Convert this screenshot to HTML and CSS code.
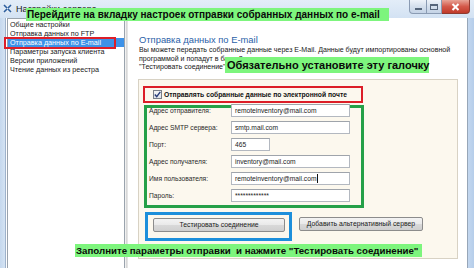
FILE: index.html
```html
<!DOCTYPE html>
<html lang="ru">
<head>
<meta charset="utf-8">
<title>Настройки</title>
<link rel="stylesheet" href="styles.css">
</head>
<body>
<div class="window">
  <div class="titlebar">
    <svg class="app-icon" width="9" height="9" viewBox="0 0 9 9">
      <rect x="0" y="0" width="9" height="9" fill="#dfe9f5"/>
      <path d="M1 1 L4 4 M8 1 L5 4 M1 8 L4 5 M8 8 L5 5" stroke="#2d5f9e" stroke-width="1.6"/>
    </svg>
    <span class="title">Настройки сервера</span>
    <div class="controls">
      <div class="ctl ctl-min"><span class="min-glyph"></span></div>
      <div class="ctl ctl-max"><span class="max-glyph"></span></div>
      <div class="ctl ctl-close">
        <svg width="9" height="8" viewBox="0 0 9 8"><path d="M1.5 1 L7.5 7 M7.5 1 L1.5 7" stroke="#fff" stroke-width="2"/></svg>
      </div>
    </div>
  </div>
  <div class="body">
    <div class="frame-left"></div>
    <div class="list">
      <div class="item">Общие настройки</div>
      <div class="item">Отправка данных по FTP</div>
      <div class="item selected">Отправка данных по E-mail</div>
      <div class="item">Параметры запуска клиента</div>
      <div class="item">Версии приложений</div>
      <div class="item">Чтение данных из реестра</div>
    </div>
    <div class="splitter"></div>
    <div class="content">
      <div class="heading">Отправка данных по E-mail</div>
      <p class="desc">Вы можете передать собранные данные через E-Mail. Данные будут импортированы основной<br>программой и попадут в базу. Для проверки соединения нажмите кнопку<br>"Тестировать соединение".</p>
      <div class="group">
        <div class="annot-red check-row">
          <span class="checkbox">
            <svg width="7" height="7" viewBox="0 0 7 7"><path d="M0.8 3.6 L2.7 5.6 L6.3 0.9" fill="none" stroke="#2a3d78" stroke-width="1.4"/></svg>
          </span>
          <span class="check-label">Отправлять собранные данные по электронной почте</span>
        </div>
        <div class="annot-green fields">
          <div class="row"><span class="label">Адрес отправителя:</span><span class="input">remoteinventory@mail.com</span></div>
          <div class="row"><span class="label">Адрес SMTP сервера:</span><span class="input">smtp.mail.com</span></div>
          <div class="row"><span class="label">Порт:</span><span class="input input-short">465</span></div>
          <div class="row"><span class="label">Адрес получателя:</span><span class="input">inventory@mail.com</span></div>
          <div class="row"><span class="label">Имя пользователя:</span><span class="input">remoteinventory@mail.com<span class="caret"></span></span></div>
          <div class="row"><span class="label">Пароль:</span><span class="input">*************</span></div>
        </div>
        <div class="buttons">
          <div class="annot-blue"><span class="btn btn-test">Тестировать соединение</span></div>
          <span class="btn btn-alt">Добавить альтернативный сервер</span>
        </div>
      </div>
    </div>
    <div class="frame-right"></div>
  </div>

  <div class="list-annot"></div>
  <div class="banner banner-top">Перейдите на вкладку настроек отправки собранных данных по e-mail</div>
  <div class="banner banner-mid">Обязательно установите эту галочку</div>
  <div class="banner banner-bottom">Заполните параметры отправки&nbsp; и нажмите "Тестировать соединение"</div>
</div>
</body>
</html>
```

FILE: styles.css
```css
* { box-sizing: border-box; }
html, body {
  margin: 0;
  padding: 0;
  width: 474px;
  height: 268px;
  overflow: hidden;
  background: #fff;
}
.window {
  position: relative;
  width: 474px;
  height: 268px;
  display: flex;
  flex-direction: column;
  font-family: "Liberation Sans", Arial, sans-serif;
  font-size: 6.7px;
  color: #222;
}
.titlebar {
  height: 18px;
  flex: none;
  display: flex;
  align-items: flex-start;
  background: linear-gradient(#e3edf8, #d3e2f3);
  padding-left: 3px;
  padding-top: 4px;
  position: relative;
}
.app-icon { flex: none; }
.title {
  margin-left: 4px;
  font-family: "Liberation Sans", sans-serif;
  font-size: 9px;
  line-height: 10px;
  color: #1b1b1b;
}
.controls {
  margin-left: auto;
  margin-top: -4px;
  margin-right: 4px;
  display: flex;
  height: 14px;
}
.ctl {
  height: 14px;
  border: 1px solid #8a9bb3;
  border-top: none;
  display: flex;
  align-items: center;
  justify-content: center;
  background: linear-gradient(#eef3f9, #d4dfec 50%, #c4d3e6);
}
.ctl-min { width: 18px; border-radius: 0 0 0 4px; }
.ctl-max { width: 15px; border-left: none; }
.ctl-close {
  width: 28px;
  border-left: none;
  border-color: #8e3a30;
  border-radius: 0 0 4px 0;
  background: linear-gradient(#e8a497, #d4594a 50%, #c03a2a);
}
.min-glyph {
  width: 7px; height: 2px;
  background: #fff;
  border: 1px solid #55657a;
  margin-top: 5px;
}
.max-glyph {
  width: 8px; height: 6px;
  border: 1px solid #55657a;
  border-top-width: 2px;
  background: transparent;
}
.body {
  flex: 1;
  display: flex;
  min-height: 0;
}
.frame-left {
  width: 7px;
  flex: none;
  background: linear-gradient(90deg, #c5d8ee, #d4e3f3 70%, #9fb3cc 70%, #9fb3cc 85%, #fff 85%);
}
.list {
  width: 118px;
  flex: none;
  background: #fff;
  border: 1px solid #9aa3ad;
  border-bottom: none;
  padding-top: 1px;
  font-size: 7.2px;
}
.item {
  height: 9px;
  line-height: 9px;
  padding-left: 2px;
  white-space: nowrap;
  color: #1a1a1a;
}
.item.selected {
  background: #3d92e8;
  color: #fff;
}
.splitter {
  width: 3px;
  flex: none;
  background: linear-gradient(90deg, #fff, #dcdcdc 40%, #cfcfcf 70%, #fff);
}
.content {
  flex: 1;
  background: #fff;
  padding: 16px 0 0 10px;
  min-width: 0;
}
.heading {
  font-size: 9.4px;
  line-height: 12px;
  color: #2b5fa8;
  padding-left: 1px;
  white-space: nowrap;
}
.desc {
  margin: 0;
  padding-left: 1px;
  font-size: 7.05px;
  line-height: 8.5px;
  white-space: nowrap;
  color: #202020;
}
.group {
  margin-top: 7px;
  width: 320px;
  height: 180px;
  background: #fcf8ee;
  border: 1px solid #d8d2c4;
  padding: 6px 0 0 4px;
}
.annot-red {
  border: 2px solid #dc1e28;
}
.check-row {
  width: 220px;
  height: 17px;
  display: flex;
  align-items: center;
  padding-left: 8px;
}
.checkbox {
  width: 9px;
  height: 9px;
  flex: none;
  border: 1px solid #7a7f88;
  background: linear-gradient(#f4f4f4, #dfe3ea);
  display: flex;
  align-items: center;
  justify-content: center;
}
.check-label {
  margin-left: 2px;
  font-weight: bold;
  font-size: 6.75px;
  white-space: nowrap;
  color: #111;
}
.annot-green {
  border: 3px solid #25a048;
}
.fields {
  margin-top: 2px;
  margin-left: 1px;
  width: 220px;
  height: 103px;
  padding: 0 0 0 2px;
  display: flex;
  flex-direction: column;
  gap: 4.2px;
}
.row {
  display: flex;
  align-items: center;
  height: 13px;
  flex: none;
}
.row:first-child { margin-top: -4px; }
.label {
  width: 82px;
  flex: none;
  white-space: nowrap;
  color: #2a2a2a;
}
.input {
  width: 119px;
  height: 13px;
  flex: none;
  background: #fff;
  border: 1px solid #b3b8c0;
  border-top-color: #9fa4ab;
  padding-left: 3px;
  line-height: 11px;
  white-space: nowrap;
  overflow: hidden;
  color: #222;
  display: flex;
  align-items: center;
}
.input-short { width: 39px; }
.caret {
  display: inline-block;
  width: 1px;
  height: 9px;
  background: #111;
}
.buttons {
  margin-top: 4px;
  margin-left: 2px;
  display: flex;
  align-items: flex-start;
  gap: 7px;
}
.annot-blue {
  width: 147px;
  height: 29px;
  border: 3px solid #1d8fdb;
  padding: 3px 0 0 5px;
}
.btn {
  display: flex;
  align-items: center;
  justify-content: center;
  height: 14px;
  border: 1px solid #8c8c8c;
  border-radius: 2px;
  background: linear-gradient(#f3f3f3, #e9e9e9 50%, #d9d9d9 51%, #cfcfcf);
  font-size: 6.85px;
  color: #1a1a1a;
  white-space: nowrap;
}
.btn-test { width: 132px; }
.btn-alt { width: 124px; margin-top: 5px; }
.frame-right {
  width: 8px;
  flex: none;
  background: linear-gradient(90deg, #fff, #fff 12%, #97a6b8 12%, #97a6b8 25%, #c3d7ef 25%, #b5cdea);
}
.list-annot {
  position: absolute;
  left: 4px;
  top: 37px;
  width: 112px;
  height: 12px;
  border: 2px solid #dc1e28;
}
.banner {
  position: absolute;
  background: #7df57d;
  color: #0a0a0a;
  font-weight: bold;
  white-space: nowrap;
  font-family: "Liberation Sans", Arial, sans-serif;
  display: flex;
  align-items: center;
  padding-left: 1px;
}
.banner-top {
  left: 26px;
  top: 8px;
  width: 363px;
  height: 13px;
  font-size: 10px;
}
.banner-mid {
  left: 225px;
  top: 57px;
  width: 204px;
  height: 16px;
  font-size: 11px;
  padding-left: 2px;
}
.banner-bottom {
  left: 75px;
  top: 244px;
  width: 347px;
  height: 13px;
  font-size: 9.7px;
}
```
